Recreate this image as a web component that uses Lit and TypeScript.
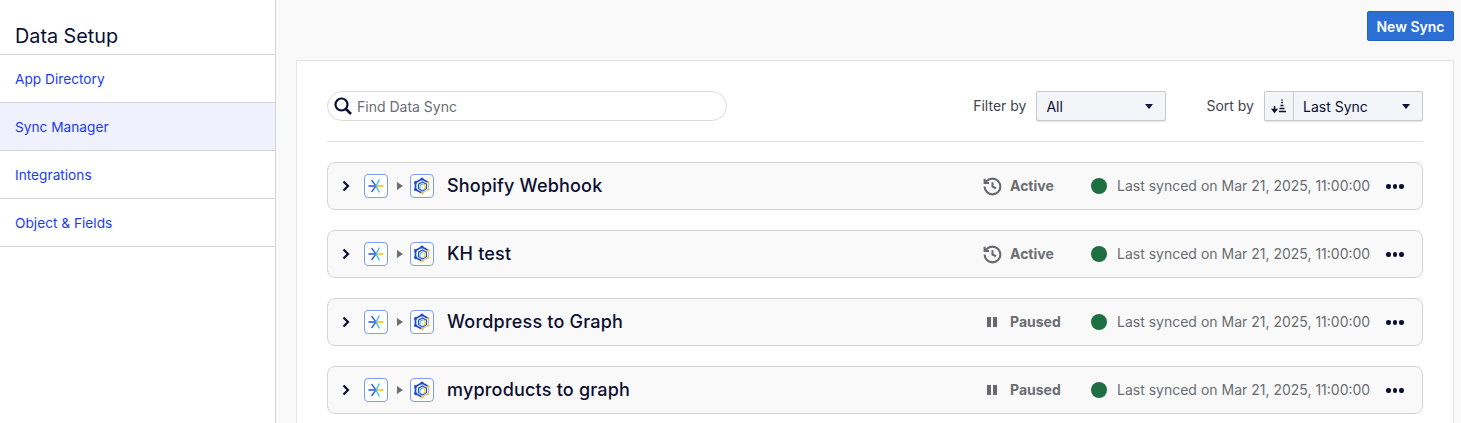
import { LitElement, html, css, svg } from "lit";
import { customElement } from "lit/decorators.js";

const rows = [
  { name: "Shopify Webhook", status: "Active" },
  { name: "KH test", status: "Active" },
  { name: "Wordpress to Graph", status: "Paused" },
  { name: "myproducts to graph", status: "Paused" },
];
const nav = ["App Directory", "Sync Manager", "Integrations", "Object & Fields"];

const chevron = html`<svg class="chev" width="10" height="12" viewBox="0 0 10 12"><path d="M2.5 1.5 7 6l-4.5 4.5" fill="none" stroke="#0b0f33" stroke-width="2.2"/></svg>`;

const srcIcon = html`<span class="appicon"><svg width="20" height="20" viewBox="0 0 20 20">
  <path d="M2.500 10H9" stroke="#2b59e8" stroke-width="1.600"/>
  <path d="M10 10h7.500" stroke="#f6d23c" stroke-width="2.200"/>
  <path d="M5.500 4 10 10 5.500 16" fill="none" stroke="#2b59e8" stroke-width="1.300"/>
  <path d="M13.500 3.500 10 10l3.500 6.500" fill="none" stroke="#3cc4ec" stroke-width="1.400"/>
</svg></span>`;

const dstIcon = html`<span class="appicon"><svg width="20" height="20" viewBox="0 0 20 20">
  <path d="M16.500 6.500 10 3 3.500 6.500v7L10 17" fill="none" stroke="#1f49d8" stroke-width="1.800"/>
  <path d="M10 17 16.500 13.500v-7" fill="none" stroke="#9fb4f2" stroke-width="1"/>
  <path d="M10.500 6 14.500 8.200v4.300L10.500 15l-4-2.500V8.200z" fill="none" stroke="#1f49d8" stroke-width="1.100"/>
  <path d="M10.500 7.500 13 9.200v3L10.500 14" fill="none" stroke="#f1cf3a" stroke-width="1.300"/>
  <path d="M8 9.500 10.500 8M8 9.500v3" fill="none" stroke="#35b8e0" stroke-width="1.100"/>
  <circle cx="10" cy="3" r="1.500" fill="#1f49d8"/><circle cx="16.500" cy="6.500" r="1.300" fill="#f1cf3a"/>
  <circle cx="16.500" cy="13.500" r="1.300" fill="#f1cf3a"/><circle cx="10.500" cy="17" r="1.500" fill="#f1cf3a"/>
  <circle cx="3.500" cy="13.500" r="1.500" fill="#1f49d8"/><circle cx="3.500" cy="6.500" r="1.500" fill="#1f49d8"/>
</svg></span>`;

const historyIcon = html`<svg class="hist" width="21" height="21" viewBox="0 0 24 24" fill="none" stroke="#666a70" stroke-width="2.400"><path d="M3 12a9 9 0 1 0 9-9 9.750 9.750 0 0 0-6.740 2.740L3 8"/><path d="M3 3v5h5"/><path d="M12 7v5l4 2"/></svg>`;
const pauseIcon = html`<svg width="18" height="18" viewBox="0 0 18 18"><path fill="#666a70" d="M4 4h4v10H4zM10 4h4v10h-4z"/></svg>`;
const caret = html`<svg width="8" height="5" viewBox="0 0 8 5"><path d="M0 0h8L4 5z" fill="#0b0f33"/></svg>`;
const sortIcon = svg`<svg width="16" height="16" viewBox="0 0 16 16"><path d="M3.500 8v5M1.500 11.500l2 2.500 2-2.500z" stroke="#0b0f33" stroke-width="1.500" fill="#0b0f33"/><path d="M8 13.500h7M8.500 10.500h5M9.500 7.500h3M10.200 4.500h1.600M10.400 2h1.200" stroke="#0b0f33" stroke-width="1.300"/></svg>`;

@customElement("app-root")
export class AppRoot extends LitElement {
  static styles = css`
    :host { display: block; height: 423px; overflow: hidden; font-family: Inter, "Liberation Sans", sans-serif; color: #0b0f33; }
    .page { display: grid; grid-template-columns: 276px 1fr; height: 423px; background: #f9f9f9; }
    .side { background: #fff; border-right: 1px solid #d4d4d6; }
    .side h1 { margin: 0; font-size: 19.800px; font-weight: 400; line-height: 24px; padding: 24px 15px 6px; border-bottom: 1px solid #d4d4d6; color: #0b0f33; height: 24px; }
    .nav { display: flex; align-items: center; height: 47px; padding-left: 15px; border-bottom: 1px solid #d4d4d6; font-size: 13.700px; color: #1a3cf5; }
    .nav.on { background: #eff1fc; }
    .main { padding: 11px 7px 0 20px; display: flex; flex-direction: column; }
    .top { display: flex; justify-content: flex-end; height: 30px; margin-bottom: 19px; }
    .btn { width: 87px; height: 30px; box-sizing: border-box; background: #2b6fd4; border: 1px solid #2562bd; border-radius: 2px; color: #fff; font: 600 14px Inter, sans-serif; display: flex; align-items: center; justify-content: center; }
    .card { background: #fff; border: 1px solid #e3e3e3; padding: 30px 30px 0; width: 1158px; box-sizing: border-box; height: 400px; }
    .tools { display: flex; align-items: center; height: 30px; padding-bottom: 20px; border-bottom: 1px solid #e1e1e3; }
    .search { width: 400px; height: 30px; box-sizing: border-box; border: 1px solid #dcdcde; border-radius: 15px; display: flex; align-items: center; gap: 4px; padding-left: 5px; font-size: 14px; color: #6b6e75; }
    .lab { font-size: 14px; color: #41444d; margin-bottom: 2px; }
    .filter { margin-left: auto; display: flex; align-items: center; gap: 10px; }
    .sort { margin-left: 40px; display: flex; align-items: center; gap: 10px; }
    .sel { height: 30px; box-sizing: border-box; background: #f4f5f8; border: 1px solid #c9cacd; border-radius: 2px; box-shadow: 0 1px 1px rgba(0,0,0,.12); display: flex; align-items: center; justify-content: space-between; font-size: 14px; color: #0b0f33; padding: 0 12px 0 9px; }
    .sel.f { width: 130px; }
    .sortgrp { display: flex; }
    .sortic { width: 29px; height: 30px; box-sizing: border-box; background: #f4f5f8; border: 1px solid #c9cacd; border-right: 0; border-radius: 2px 0 0 2px; display: flex; align-items: center; justify-content: center; box-shadow: 0 1px 1px rgba(0,0,0,.12); }
    .sel.s { width: 130px; border-radius: 0 2px 2px 0; }
    .list { display: flex; flex-direction: column; gap: 20px; margin-top: 20px; }
    .row { height: 48px; box-sizing: border-box; background: #f9f9f9; border: 1px solid #d4d4d6; border-radius: 8px; display: flex; align-items: center; padding-left: 13px; }
    .chev { flex: none; margin-right: 13px; }
    .appicon { width: 24px; height: 24px; box-sizing: border-box; border: 1px solid #7d9cf5; border-radius: 4px; background: #fff; display: flex; align-items: center; justify-content: center; }
    .tri { width: 0; height: 0; border-left: 6px solid #6e6e6e; border-top: 4.500px solid transparent; border-bottom: 4.500px solid transparent; margin: 0 7px 0 9px; }
    .name { font-size: 18px; margin: 0 0 2px 13px; font-weight: 450; letter-spacing: .2px; color: #0b0f33; }
    .st { margin-left: auto; display: flex; align-items: center; gap: 9px; font-size: 14px; font-weight: 700; color: #6a6d72; }
    .st span { margin-bottom: 2px; }
    .stw { width: 108px; }
    .hist { margin: 0 -1.500px; }
    .dot { width: 16px; height: 16px; border-radius: 50%; background: #1d6f42; margin-right: 10px; flex: none; }
    .when { font-size: 14px; color: #6a6d72; width: 254px; white-space: nowrap; margin-bottom: 2px; }
    .more { display: flex; gap: 2px; margin: 1px 18.500px 0 15px; }
    .more i { width: 4.500px; height: 4.500px; border-radius: 50%; background: #0b0f33; }
  `;
  render() {
    return html`<div class="page">
      <aside class="side">
        <h1>Data Setup</h1>
        ${nav.map((n) => html`<div class="nav ${n === "Sync Manager" ? "on" : ""}">${n}</div>`)}
      </aside>
      <main class="main">
        <div class="top"><div class="btn">New Sync</div></div>
        <section class="card">
          <div class="tools">
            <div class="search">
              <svg width="20" height="20" viewBox="0 0 20 20"><circle cx="8.500" cy="8.500" r="6" fill="none" stroke="#0b0f33" stroke-width="2.200"/><path d="M13 13l5 5" stroke="#0b0f33" stroke-width="2.600"/></svg>
              <span>Find Data Sync</span>
            </div>
            <div class="filter"><span class="lab">Filter by</span><div class="sel f"><span>All</span>${caret}</div></div>
            <div class="sort"><span class="lab">Sort by</span><div class="sortgrp"><div class="sortic">${sortIcon}</div><div class="sel s"><span>Last Sync</span>${caret}</div></div></div>
          </div>
          <div class="list">
            ${rows.map((r) => html`<div class="row">
              ${chevron}${srcIcon}<span class="tri"></span>${dstIcon}
              <span class="name">${r.name}</span>
              <div class="st stw">${r.status === "Active" ? historyIcon : pauseIcon}<span>${r.status}</span></div>
              <span class="dot"></span>
              <span class="when">Last synced on Mar 21, 2025, 11:00:00</span>
              <span class="more"><i></i><i></i><i></i></span>
            </div>`)}
          </div>
        </section>
      </main>
    </div>`;
  }
}
